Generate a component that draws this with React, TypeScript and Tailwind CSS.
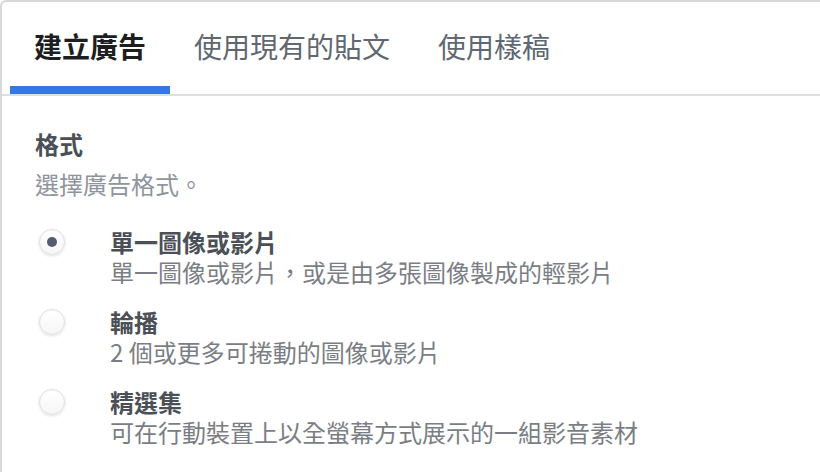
import React from "react";

const font = { fontFamily: '"Noto Sans CJK TC", "Noto Sans", sans-serif' };

function Radio({ checked }: { checked?: boolean }) {
  return (
    <div className="w-[26px] h-[26px] rounded-full border border-[#dedede] bg-gradient-to-b from-white to-[#f6f6f6] shadow-[0_1px_3px_rgba(0,0,0,0.12)] flex items-center justify-center shrink-0">
      {checked && <div className="w-[10px] h-[10px] rounded-full bg-[#545c6e]" />}
    </div>
  );
}

const options = [
  { title: "單一圖像或影片", desc: "單一圖像或影片，或是由多張圖像製成的輕影片", checked: true },
  { title: "輪播", desc: "2 個或更多可捲動的圖像或影片" },
  { title: "精選集", desc: "可在行動裝置上以全螢幕方式展示的一組影音素材" },
];

export default function App() {
  return (
    <div className="w-[820px] h-[472px] bg-white overflow-hidden" style={font}>
      <div className="h-[480px] border-l-2 border-t-2 border-[#d8d8d8] rounded-tl-[6px]">
        <div className="flex h-[94px] border-b-2 border-[#dddfe2] pl-[8px]">
          <div className="flex flex-col px-[24px] border-b-[8px] border-[#3578e5]">
            <div className="pt-[24px] text-[28px] leading-[40px] font-bold text-[#1c1e21]">建立廣告</div>
          </div>
          <div className="flex flex-col px-[24px]">
            <div className="pt-[24px] text-[28px] leading-[40px] text-[#606770]">使用現有的貼文</div>
          </div>
          <div className="flex flex-col px-[24px]">
            <div className="pt-[24px] text-[28px] leading-[40px] text-[#606770]">使用樣稿</div>
          </div>
        </div>
        <div className="pl-[33px] pt-[30px]">
          <div className="text-[24px] leading-[36px] font-bold text-[#4b4f56] mb-[4px]">格式</div>
          <div className="text-[24px] leading-[36px] text-[#90949c]">選擇廣告格式。</div>
          <div className="mt-[25px] flex flex-col gap-[20px]">
            {options.map((o) => (
              <div key={o.title} className="flex">
                <div className="w-[75px] pl-[4px] h-[30px] flex items-center">
                  <Radio checked={o.checked} />
                </div>
                <div>
                  <div className="text-[24px] leading-[30px] font-bold text-[#4b4f56]">{o.title}</div>
                  <div className="text-[24px] leading-[30px] text-[#7a7e84]">{o.desc}</div>
                </div>
              </div>
            ))}
          </div>
        </div>
      </div>
    </div>
  );
}
